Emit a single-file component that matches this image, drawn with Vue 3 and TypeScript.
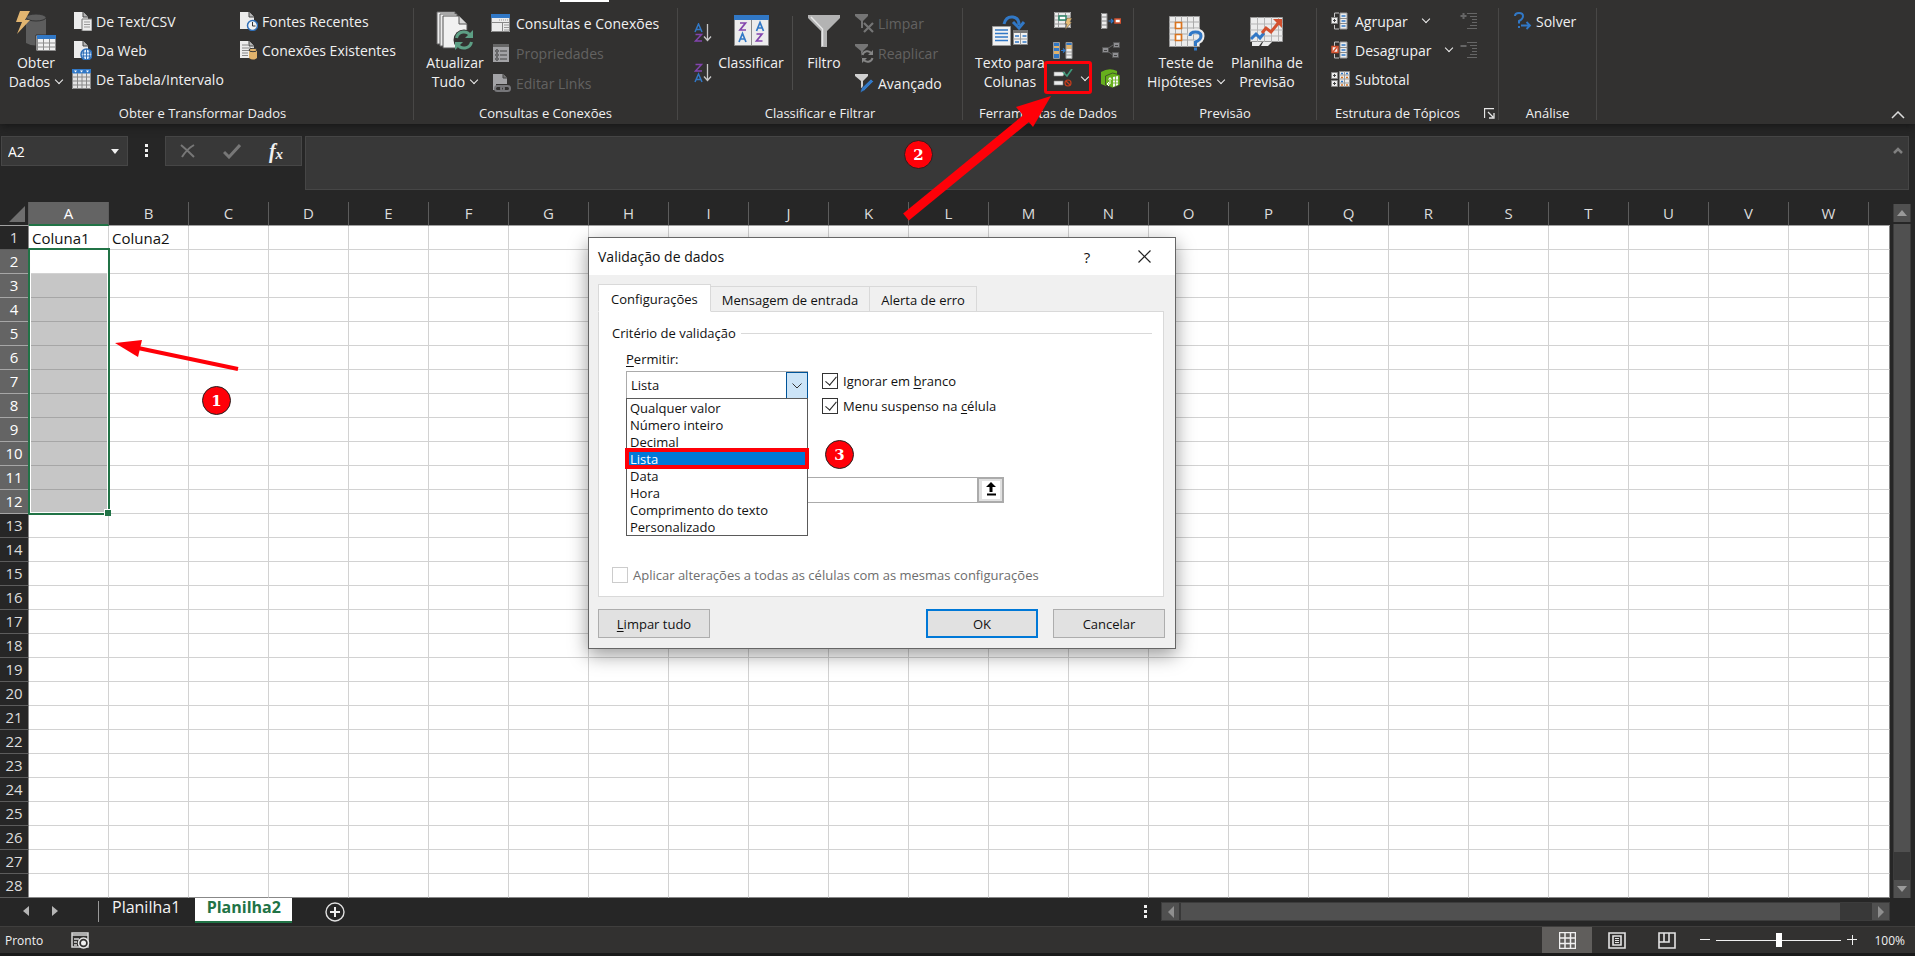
<script setup lang="ts">
import { ref } from 'vue'

const page = '<path d="M2 1h9l5 5v12H2z" fill="#ececec"/><path d="M11 1v5h5" fill="#b5b5b5" stroke="#444" stroke-width="1"/>'
const funnel = '<path d="M1 1h13v2l-5 5v7H7V8L1 3z"/>'

const icons: Record<string, string> = {
  text: page + '<path d="M10 8h10v12H10z" fill="#ececec" stroke="#777"/><path d="M12 11h6M12 13.500h6M12 16h6" stroke="#999"/>',
  web: page + '<circle cx="14.500" cy="14.500" r="5.500" fill="#e8f1fb" stroke="#2f6fb8" stroke-width="1.500"/><path d="M9 13h11M9 16h11M14.500 9v11M12 9.500q-1.500 5 0 10M17 9.500q1.500 5 0 10" stroke="#2f6fb8" fill="none"/>',
  tableRange: '<path d="M0 0h19v20H0z" fill="#e4e4e4"/><path d="M0 0h19v4.500H0z" fill="#3178c6"/><path d="M2 1.500h3l-1.500 2zM8 1.500h3l-1.500 2zM14 1.500h3l-1.500 2z" fill="#fff"/><path d="M0.500 4v15.500h18V4M0 8h19M0 12h19M0 16h19M5.500 4v16M10 4v16M14.500 4v16" stroke="#888" fill="none"/>',
  recent: page + '<circle cx="14.500" cy="14.500" r="5" fill="#f2f2f2" stroke="#2f6fb8" stroke-width="1.500"/><path d="M14.500 11v4h3" stroke="#333" fill="none"/>',
  existing: page + '<path d="M4 5h6M4 8h9M4 10.500h7M4 13h6M4 15.500h6" stroke="#888"/><path d="M11 10h8v8q-4 3-8 0z" fill="#e0b26b"/><ellipse cx="15" cy="10" rx="4" ry="1.700" fill="#e0b26b" stroke="#3a3a3a"/>',
  queries: '<path d="M0 1h19v18H0z" fill="#ececec"/><path d="M0 1h19v4H0z" fill="#3178c6"/><path d="M8 7h10" stroke="#999" stroke-dasharray="1 1"/><path d="M0.500 5v13.500h18V5M1 9.500h18M11.500 9v10" stroke="#888" fill="none"/><path d="M13 12h5M13 14.500h5M13 17h5" stroke="#999"/>',
  props: '<path d="M2 1h16v18H2z" fill="#a3a3a6"/><path d="M2 1h16v3H2z" fill="#666"/><g fill="none" stroke="#444"><circle cx="6" cy="8" r="1.300"/><circle cx="6" cy="12" r="1.300"/><circle cx="6" cy="16" r="1.300"/><path d="M9 8h7M9 12h7M9 16h7"/></g>',
  links: '<path d="M2 1h10l4 4v12H2z" fill="#a3a3a6"/><path d="M12 1v4h4" stroke="#444" fill="#777"/><path d="M5 11h14v8H5z" fill="#323130"/><g fill="none" stroke="#77777a" stroke-width="2"><rect x="4" y="13" width="9" height="5" rx="2.500"/><rect x="10" y="13" width="9" height="5" rx="2.500"/></g>',
  clear: '<g fill="#757575">' + funnel + '</g><path d="M10 10l9 9M19 10l-9 9" stroke="#757575" stroke-width="2.200"/>',
  reapply: '<g fill="#757575">' + funnel + '</g><circle cx="13.500" cy="13.500" r="6.500" fill="#323130"/><path d="M8.500 12a5 5 0 0 1 9-1.500M18.500 15a5 5 0 0 1-9 1.500" fill="none" stroke="#858585" stroke-width="2"/><path d="M19 7v5h-5zM8 20v-5h5z" fill="#858585"/>',
  advanced: '<g fill="#d0d0d0">' + funnel + '</g><path d="M6 20l1.500-5L17 6l2.500 2.500-9 9z" fill="#3178c6" stroke="#323130" stroke-width=".7"/>',
  flash: '<path d="M1 1h17v16H1z" fill="#ececec"/><path d="M1.500 1.500h16v15h-16zM1 5h17M1 9h17M1 13h17M5.500 1v16M12.500 1v16" stroke="#999" fill="none"/><path d="M6 5h7v4H6z" fill="#fff" stroke="#2b8467" stroke-width="1.500"/><path d="M14 7h5l-2 4h2l-7 8 2-6h-2z" fill="#e6bd77" stroke="#323130" stroke-width=".5"/>',
  dupes: '<path d="M0 2h6v16H0zM13 2h6v16h-6z" fill="#ececec"/><path d="M0 2h6v4H0zM0 14h6v4H0zM13 2h6v3h-6z" fill="#3178c6"/><path d="M0 6h6v2H0zM0 11h6v3H0zM13 5h6v4h-6z" fill="#e0b26b"/><path d="M0 8h6v3H0z" fill="#3178c6"/><path d="M.5 2.500h6v16h-6zM13 2.500h6v16h-6zM13 12h6M13 15h6" stroke="#999" fill="none"/><path d="M8 10.500h3.500M10 8.500l2 2-2 2" stroke="#3178c6" stroke-width="1.200" fill="none"/>',
  validate: '<path d="M1 3h11l-2 4H1zM1 12h9v4H1z" fill="#ececec" stroke="#888" stroke-width=".6"/><path d="M10 3l4 4 5-7" stroke="#3f9a7b" stroke-width="1.700" fill="none"/><circle cx="15" cy="14" r="3" fill="none" stroke="#c83c1c" stroke-width="1.200"/><path d="M13 12l4 4" stroke="#c83c1c" stroke-width="1.200"/>',
  consolidate: '<path d="M0 2h6v16H0z" fill="#ececec"/><path d="M.5 2.500h5.500v15H.5zM0 6h6M0 10h6M0 14h6" stroke="#888" fill="none"/><path d="M7.500 10h4M10 8l2 2-2 2" stroke="#3178c6" stroke-width="1.200" fill="none"/><path d="M14 8h5.500v4H14z" fill="#fff" stroke="#d3512f" stroke-width="1.500"/>',
  relations: '<path d="M6 9l6-4M6 11l6 4" stroke="#666"/><g fill="#8e8e91" stroke="#555"><path d="M1.500 7.500h6v5h-6zM12.500 2.500h6v5h-6zM11.500 12.500h6v5h-6z"/></g><path d="M3 10.500h3M14 5.500h3M13 15.500h3" stroke="#444"/>',
  model: '<path d="M0 3q8-5 16-1v6L6 10l-1 7-5-2z" fill="#66b01c"/><path d="M4.500 7l7-3 7.500 2v10l-7.500 3-7-3z" fill="#66b01c" stroke="#323130" stroke-width=".7"/><path d="M12 8l5-1v9l-5 2z" fill="#f3f3f3"/><path d="M12 11h5M12 14h5M14.500 7v10" stroke="#66b01c" stroke-width=".8"/><path d="M7 15h2V9M7.500 10.500L9 8.500l1.500 2M8 13l-2 2 2 2" fill="none" stroke="#fff"/>',
  group: '<path d="M8 1H3.500v4M8 17H3.500v-4" stroke="#c4c4c4" fill="none"/><path d="M.5 5.500h6v6h-6z" fill="#ececec" stroke="#888"/><path d="M3.500 7v3M2 8.500h3" stroke="#444"/><path d="M9 1h7v16H9z" fill="#ececec" stroke="#999"/><path d="M9 6.500h7M9 11.500h7" stroke="#888"/><path d="M10.500 4h4M10.500 9h4M10.500 14h4" stroke="#3178c6" stroke-width="1.500"/>',
  ungroup: '<path d="M8 1H3.500v4M8 17H3.500v-4" stroke="#c4c4c4" fill="none"/><path d="M1 5.500h6v6H1z" fill="#f3f3f3" stroke="#d3512f" stroke-width="1.500"/><path d="M2 11l4-5" stroke="#d3512f" stroke-width="1.500"/><path d="M9 1h7v16H9z" fill="#ececec" stroke="#999"/><path d="M9 6.500h7M9 11.500h7" stroke="#888"/><path d="M10.500 4h4M10.500 9h4M10.500 14h4" stroke="#3178c6" stroke-width="1.500"/>',
  subtotal: '<g fill="#ececec" stroke="#888"><path d="M.5 2.500h6v6h-6zM.5 10.500h6v6h-6zM8.500 1.500h10v15h-10z"/></g><path d="M3.500 4v3M2 5.500h3M3.500 12v3M2 13.500h3" stroke="#444"/><path d="M8 5h11M8 9h11M8 13h11M13.500 1v16" stroke="#999"/><path d="M10 3.500h2M10 11.500h2M15 3.500h2" stroke="#3178c6" stroke-width="1.500"/><path d="M10 7.500h2M15 7.500h2M10 15h2M15 15h2" stroke="#d9741f" stroke-width="1.500"/>',
  showDetail: '<path d="M3.500 1v6M.5 4h6" stroke="#666" stroke-width="2"/><path d="M7 1.500h10M10 4.500h7M12 7.500h5M12 10.500h5M10 13.500h7M7 16.500h10" stroke="#666"/>',
  hideDetail: '<path d="M.5 5h6" stroke="#666" stroke-width="2"/><path d="M7 1.500h10M10 4.500h7M12 7.500h5M12 10.500h5M10 13.500h7M7 16.500h10" stroke="#666"/>',
  solver: '<path d="M1 4q0-3 4-3t4 3-4 5v2.500" stroke="#3178c6" stroke-width="2" fill="none"/><path d="M4 14h2v2H4z" fill="#3178c6"/><path d="M7 13.500h9M12.500 10l3.500 3.500-3.500 3.500" stroke="#3178c6" stroke-width="1.800" fill="none"/>',
  getData: '<path d="M10 6v26q9 5 20 0V6z" fill="#5d5d5d"/><ellipse cx="20" cy="6.500" rx="10" ry="3.500" fill="#5d5d5d" stroke="#333"/><path d="M4 0h10L9 9h5L1 23l5-12H0z" fill="#e2b570"/><path d="M20 24h20v16H20z" fill="#f0f0f0" stroke="#323130"/><path d="M21 24h19v4H21z" fill="#3178c6"/><path d="M21.500 28v11.500h18V28M21 32h19M21 36h19M27.500 28v12M33.500 28v12" stroke="#8c8c8c" fill="none"/>',
  refresh: '<path d="M1 1h18v32H1z" fill="#ececec" stroke="#666"/><path d="M4 3h17v32H4z" fill="#ececec" stroke="#666"/><path d="M7 5h16l8 8v24H7z" fill="#f1f1f1" stroke="#555"/><path d="M23 5v8h8" fill="#d8d8d8" stroke="#555"/><circle cx="28" cy="29" r="10.500" fill="#323130"/><path d="M20.500 27a7.500 7.500 0 0 1 14-2M35.500 31a7.500 7.500 0 0 1-14 2" fill="none" stroke="#5d9f85" stroke-width="3"/><path d="M37 19v8h-8zM19 39v-8h8z" fill="#5d9f85"/>',
  sort: '<path d="M.5.5h34v30H.5z" fill="#ececec" stroke="#888"/><path d="M0 0h35v5H0z" fill="#3178c6"/><path d="M17.500 5v26" stroke="#888"/><g fill="none" stroke-width="1.700"><path d="M6 8h5.500L6 15h6M22.500 19h5.500l-5.500 7h6" stroke="#8244ad"/><path d="M5 27l3.500-8.500L12 27M6.500 24h4M22.500 16L26 7.500l3.500 8.500M24 13h4" stroke="#3178c6"/></g>',
  filter: '<path d="M0 0h32v3L19 16v16h-6V16L0 3z" fill="#b3b3b3"/><path d="M3 2l11.500 12v17" stroke="#e6e6e6" fill="none" stroke-width="1.500"/>',
  columns: '<path d="M.5 11.500h18v19H.5z" fill="#f1f1f1" stroke="#999"/><path d="M3 15h13M3 18.500h13M3 22h13M3 25.500h13" stroke="#3178c6" stroke-width="1.300"/><path d="M21.500 15.500h14v14h-14z" fill="#f1f1f1" stroke="#888"/><path d="M21 15h15v3H21z" fill="#777"/><path d="M28.500 18v12M21 24h15" stroke="#999"/><path d="M23 21h4M30.500 21h4M23 27h4M30.500 27h4" stroke="#3178c6" stroke-width="1.300"/><path d="M12 9q2-8 9-7 6 1 6 8" stroke="#3178c6" stroke-width="3" fill="none"/><path d="M21 7l6 6 5-6" stroke="#3178c6" stroke-width="3" fill="none"/>',
  whatIf: '<path d="M.5.5h30v30H.5z" fill="#ececec" stroke="#999"/><path d="M0 6h31M0 12h31M0 18h31M0 24h31M6.500 0v31M12.500 0v31M18.500 0v31M24.500 0v31" stroke="#aaa"/><path d="M6.500 6.500h6v6h-6zM6.500 18.500h6v6h-6z" fill="#fff" stroke="#d9741f" stroke-width="1.700"/><path d="M21 20q0-5 6-5t6 5-6 6v4" stroke="#ececec" stroke-width="5" fill="none"/><path d="M21 20q0-4 5.500-4t5.500 4-5.500 6v4M25 33h3" stroke="#3178c6" stroke-width="3" fill="none"/>',
  forecast: '<path d="M.5.5h32v24H.5z" fill="#ececec" stroke="#999"/><path d="M2 25h10l-3 4H2zM13 25h9l-4 4h-7z" fill="#ececec"/><path d="M0 7h33M0 13h33M0 19h33M7.500 0v25M14.500 0v25M21.500 0v25M28.500 0v25" stroke="#b5b5b5"/><path d="M1 22l5-5 4 4 4-5" stroke="#3178c6" stroke-width="3" fill="none"/><path d="M12 16l4-5 5 4 9-11" stroke="#d3512f" stroke-width="3" fill="none"/><path d="M23 2h9v9z" fill="#d3512f"/>',
  az: '<g fill="none" stroke-width="1.500"><path d="M1 9l3.500-8L8 9M2.500 6.500h4" stroke="#3178c6"/><path d="M1.500 11.500h6l-6 6.500h6.500" stroke="#8244ad"/></g><path d="M13.500 1v16M10 13.500l3.500 4 3.500-4" stroke="#c8c8c8" stroke-width="1.300" fill="none"/>',
  za: '<g fill="none" stroke-width="1.500"><path d="M1 19l3.500-8L8 19M2.500 16.500h4" stroke="#3178c6"/><path d="M1.500 1.500h6L1.500 8H8" stroke="#8244ad"/></g><path d="M13.500 1v16M10 13.500l3.500 4 3.500-4" stroke="#c8c8c8" stroke-width="1.300" fill="none"/>',
}

const columns = 'ABCDEFGHIJKLMNOPQRSTUVW'.split('')
const rowCount = 28
const cells: Record<string, string> = { A1: 'Coluna1', B1: 'Coluna2' }
const inSelection = (row: number) => row >= 2 && row <= 12

const options = [
  'Qualquer valor', 'Número inteiro', 'Decimal', 'Lista',
  'Data', 'Hora', 'Comprimento do texto', 'Personalizado',
]
const allow = ref('Lista')
const ignoreBlank = ref(true)
const inCellMenu = ref(true)
const source = ref('')
const formula = ref('')
const cellName = ref('A2')
const zoom = ref(50)
</script>

<template>
  <div class="app">
    <header class="ribbon">
      <i class="active-tab"></i>
      <section class="group g-get">
        <div class="body">
          <button class="big w72"><svg width="40" height="42" viewBox="0 0 40 42" v-html="icons.getData" /><span>Obter</span><span>Dados <i class="caret" /></span></button>
          <div class="stack get-files">
            <button class="cmd"><svg width="20" height="20" v-html="icons.text" />De Text/CSV</button>
            <button class="cmd"><svg width="20" height="20" v-html="icons.web" />Da Web</button>
            <button class="cmd"><svg width="20" height="20" v-html="icons.tableRange" />De Tabela/Intervalo</button>
          </div>
          <div class="stack">
            <button class="cmd"><svg width="20" height="20" v-html="icons.recent" />Fontes Recentes</button>
            <button class="cmd"><svg width="20" height="20" v-html="icons.existing" />Conexões Existentes</button>
          </div>
        </div>
        <h2>Obter e Transformar Dados</h2>
      </section>

      <section class="group g-queries">
        <div class="body">
          <button class="big w72"><svg width="38" height="42" viewBox="0 0 38 42" v-html="icons.refresh" /><span>Atualizar</span><span>Tudo <i class="caret" /></span></button>
          <div class="stack loose">
            <button class="cmd wide"><svg width="20" height="20" v-html="icons.queries" />Consultas e Conexões</button>
            <button class="cmd wide" disabled><svg width="20" height="20" v-html="icons.props" />Propriedades</button>
            <button class="cmd wide" disabled><svg width="20" height="20" v-html="icons.links" />Editar Links</button>
          </div>
        </div>
        <h2>Consultas e Conexões</h2>
      </section>

      <section class="group g-sort">
        <div class="body">
          <div class="stack az">
            <button class="cmd" aria-label="Classificar de A a Z"><svg width="18" height="20" v-html="icons.az" /></button>
            <button class="cmd" aria-label="Classificar de Z a A"><svg width="18" height="20" v-html="icons.za" /></button>
          </div>
          <button class="big w78"><svg width="35" height="42" viewBox="0 -4 35 42" v-html="icons.sort" /><span>Classificar</span></button>
          <i class="divider" />
          <button class="big w60"><svg width="32" height="42" viewBox="0 -4 32 42" v-html="icons.filter" /><span>Filtro</span></button>
          <div class="stack loose">
            <button class="cmd" disabled><svg width="20" height="20" v-html="icons.clear" />Limpar</button>
            <button class="cmd" disabled><svg width="20" height="20" v-html="icons.reapply" />Reaplicar</button>
            <button class="cmd"><svg width="20" height="20" v-html="icons.advanced" />Avançado</button>
          </div>
        </div>
        <h2>Classificar e Filtrar</h2>
      </section>

      <section class="group g-tools">
        <div class="body">
          <button class="big w84"><svg width="36" height="42" viewBox="0 -4 36 42" v-html="icons.columns" /><span>Texto para</span><span>Colunas</span></button>
          <div class="stack tools-a">
            <button class="cmd" aria-label="Preenchimento relâmpago"><svg width="20" height="20" v-html="icons.flash" /></button>
            <button class="cmd" aria-label="Remover duplicadas"><svg width="20" height="20" v-html="icons.dupes" /></button>
            <button class="cmd" aria-label="Validação de dados"><svg width="20" height="20" v-html="icons.validate" /><i class="caret" /></button>
          </div>
          <div class="stack">
            <button class="cmd" aria-label="Consolidar"><svg width="20" height="20" v-html="icons.consolidate" /></button>
            <button class="cmd" aria-label="Relações"><svg width="20" height="20" v-html="icons.relations" /></button>
            <button class="cmd" aria-label="Modelo de dados"><svg width="20" height="20" v-html="icons.model" /></button>
          </div>
        </div>
        <h2>Ferramentas de Dados</h2>
      </section>

      <section class="group g-forecast">
        <div class="body">
          <button class="big w90"><svg width="34" height="42" viewBox="0 -5 34 42" v-html="icons.whatIf" /><span>Teste de</span><span>Hipóteses <i class="caret" /></span></button>
          <button class="big w72"><svg width="34" height="42" viewBox="0 -6 34 42" v-html="icons.forecast" /><span>Planilha de</span><span>Previsão</span></button>
        </div>
        <h2>Previsão</h2>
      </section>

      <section class="group g-outline">
        <div class="body">
          <div class="stack outline-main">
            <button class="cmd"><svg width="20" height="18" v-html="icons.group" />Agrupar<i class="caret far" /></button>
            <button class="cmd"><svg width="20" height="18" v-html="icons.ungroup" />Desagrupar<i class="caret far" /></button>
            <button class="cmd"><svg width="20" height="18" v-html="icons.subtotal" />Subtotal</button>
          </div>
          <div class="stack">
            <button class="cmd" disabled aria-label="Mostrar detalhe"><svg width="18" height="18" v-html="icons.showDetail" /></button>
            <button class="cmd" disabled aria-label="Ocultar detalhe"><svg width="18" height="18" v-html="icons.hideDetail" /></button>
          </div>
        </div>
        <h2>Estrutura de Tópicos</h2>
        <button class="launcher" aria-label="Configurações de estrutura"><svg width="11" height="11"><path d="M10 0.500H.5V10M4 4l5 5M10 5v5H5" fill="none" stroke="#e6e6e6" stroke-width="1.300" /></svg></button>
      </section>

      <section class="group g-analysis">
        <div class="body">
          <div class="stack">
            <button class="cmd"><svg width="18" height="18" v-html="icons.solver" />Solver</button>
          </div>
        </div>
        <h2>Análise</h2>
      </section>
      <button class="collapse" aria-label="Recolher faixa de opções"><svg width="14" height="8"><path d="M1 7l6-6 6 6" fill="none" stroke="#dcdcdc" stroke-width="1.500" /></svg></button>
    </header>

    <div class="formula-bar">
      <div class="name-box">
        <input v-model="cellName" aria-label="Caixa de nome">
        <svg width="8" height="5"><path d="M0 0h8L4 5z" fill="#f0f0f0" /></svg>
      </div>
      <i class="dots" />
      <div class="fx-box">
        <button aria-label="Cancelar edição"><svg width="16" height="14"><path d="M1 1q6 5 13 12M14 1Q7 5 2 13" fill="none" stroke="#777" stroke-width="2" /></svg></button>
        <button aria-label="Inserir"><svg width="18" height="15"><path d="M1 8l5 5L17 1" fill="none" stroke="#777" stroke-width="3" /></svg></button>
        <button class="fx" aria-label="Inserir função">f<sub>x</sub></button>
      </div>
      <div class="formula">
        <textarea v-model="formula" aria-label="Barra de fórmulas" />
        <svg width="10" height="7"><path d="M1 6l4-4 4 4" fill="none" stroke="#808080" stroke-width="2.500" /></svg>
      </div>
    </div>

    <main class="workspace">
      <div class="sheet">
        <table>
          <colgroup><col class="c-head"><col v-for="c in columns" :key="c" class="c-cell"><col></colgroup>
          <thead>
            <tr>
              <th class="corner"><svg width="16" height="16"><path d="M16 0v16H0z" fill="#6e6e6e" /></svg></th>
              <th v-for="c in columns" :key="c" :class="{ on: c === 'A' }">{{ c }}</th>
              <th />
            </tr>
          </thead>
          <tbody>
            <tr v-for="r in rowCount" :key="r">
              <th :class="{ on: inSelection(r) }">{{ r }}</th>
              <td v-for="c in columns" :key="c" :class="{ sel: c === 'A' && inSelection(r) && r > 2 }">{{ cells[c + r] }}</td>
              <td />
            </tr>
          </tbody>
        </table>
        <div class="selection"><i /></div>
      </div>
      <div class="vscroll">
        <button aria-label="Rolar para cima"><svg width="10" height="6"><path d="M5 0l5 6H0z" fill="#9a9a9a" /></svg></button>
        <div class="vthumb" />
        <div class="vtrack" />
        <button aria-label="Rolar para baixo"><svg width="10" height="6"><path d="M0 0h10L5 6z" fill="#9a9a9a" /></svg></button>
      </div>
    </main>

    <nav class="tabs">
      <button class="arrow" aria-label="Planilha anterior"><svg width="6" height="10"><path d="M6 0v10L0 5z" fill="#b5b5b5" /></svg></button>
      <button class="arrow" aria-label="Próxima planilha"><svg width="6" height="10"><path d="M0 0l6 5-6 5z" fill="#b5b5b5" /></svg></button>
      <i class="tab-line" />
      <a href="#planilha1" class="tab">Planilha1</a>
      <a href="#planilha2" class="tab current">Planilha2</a>
      <button class="add" aria-label="Nova planilha"><svg width="20" height="20"><circle cx="10" cy="10" r="9" fill="none" stroke="#e0e0e0" stroke-width="1.400" /><path d="M10 5v10M5 10h10" stroke="#f0f0f0" stroke-width="2" /></svg></button>
      <div class="hscroll-area">
        <i class="dots" />
        <div class="hscroll">
          <button aria-label="Rolar para a esquerda"><svg width="6" height="12"><path d="M6 0v12L0 6z" fill="#8f8f8f" /></svg></button>
          <div class="hthumb" />
          <div class="htrack" />
          <button aria-label="Rolar para a direita"><svg width="6" height="12"><path d="M0 0l6 6-6 6z" fill="#8f8f8f" /></svg></button>
        </div>
      </div>
    </nav>

    <footer class="status">
      <span>Pronto</span>
      <button class="macro" aria-label="Gravar macro"><svg width="19" height="17"><path d="M1 1h16v14H1z" fill="none" stroke="#d8d8d8" stroke-width="1.500" /><path d="M1 3h16M3 7h5M3 10h3M3 13h3" stroke="#d8d8d8" stroke-width="1.500" /><circle cx="12.500" cy="11" r="5" fill="#323130" stroke="#e8e8e8" stroke-width="1.500" /><circle cx="12.500" cy="11" r="2.500" fill="#f0f0f0" /></svg></button>
      <div class="views">
        <button class="view active" aria-label="Normal"><svg width="17" height="17"><path d="M.5.500h16v16H.5zM6 0v17M11.500 0v17M0 6h17M0 11.500h17" fill="none" stroke="#f0f0f0" stroke-width="1.500" /></svg></button>
        <button class="view" aria-label="Layout da página"><svg width="18" height="17"><path d="M1 1h16v15H1zM5 4h8v9H5z" fill="none" stroke="#e4e4e4" stroke-width="1.600" /><path d="M7 6.500h4M7 8.500h4M7 10.500h4" stroke="#e4e4e4" /></svg></button>
        <button class="view" aria-label="Quebra de página"><svg width="18" height="17"><path d="M1 1h16v15H1zM1 10h10V1M6 1v9" fill="none" stroke="#e4e4e4" stroke-width="1.600" /></svg></button>
      </div>
      <button class="zoom-btn" aria-label="Reduzir"><svg width="10" height="10"><path d="M0 4.500h10" stroke="#f0f0f0" /></svg></button>
      <input v-model="zoom" class="zoom" type="range" min="0" max="100" aria-label="Zoom">
      <button class="zoom-btn" aria-label="Ampliar"><svg width="10" height="10"><path d="M0 4.500h10M5.500 0v10" stroke="#f0f0f0" /></svg></button>
      <span class="pct">100%</span>
    </footer>

    <form class="dialog" role="dialog" aria-labelledby="dlg-title" @submit.prevent>
      <div class="dlg-head">
        <h1 id="dlg-title">Validação de dados</h1>
        <button type="button" class="help" aria-label="Ajuda">?</button>
        <button type="button" class="close" aria-label="Fechar"><svg width="13" height="13"><path d="M.5.500l12 12M12.500.500l-12 12" stroke="#222" stroke-width="1.200" /></svg></button>
      </div>
      <div class="dlg-body">
        <div class="dlg-tabs" role="tablist">
          <button type="button" role="tab" class="active" aria-selected="true">Configurações</button>
          <button type="button" role="tab">Mensagem de entrada</button>
          <button type="button" role="tab">Alerta de erro</button>
        </div>
        <div class="panel">
          <div class="legend">Critério de validação</div>
          <div class="criteria">
            <label for="allow"><u>P</u>ermitir:</label>
            <div class="line">
              <div class="combo">
                <select id="allow" v-model="allow"><option v-for="o in options" :key="o">{{ o }}</option></select>
                <span class="drop"><svg width="10" height="6"><path d="M.5.500L5 5 9.500.500" fill="none" stroke="#333" /></svg></span>
                <ul class="list" role="listbox" aria-label="Permitir">
                  <li v-for="o in options" :key="o" role="option" :aria-selected="o === allow" :class="{ picked: o === allow }" @click="allow = o">{{ o }}</li>
                </ul>
              </div>
              <div class="checks">
                <label><input v-model="ignoreBlank" type="checkbox"><span>Ignorar em <u>b</u>ranco</span></label>
                <label><input v-model="inCellMenu" type="checkbox"><span>Menu suspenso na <u>c</u>élula</span></label>
              </div>
            </div>
            <div class="source">
              <input v-model="source" type="text" aria-label="Fonte">
              <button type="button" aria-label="Selecionar intervalo"><svg width="18" height="18"><path d="M0 0h18v18H0z" fill="#fff" /><path d="M9 1l5 5h-3.500v5h-3V6H4zM5 12.500h9v2H5z" fill="#000" /></svg></button>
            </div>
          </div>
          <label class="apply"><input type="checkbox" disabled><span>Aplicar alterações a todas as células com as mesmas configurações</span></label>
        </div>
        <div class="actions">
          <button type="button"><span><u>L</u>impar tudo</span></button>
          <button type="submit" class="primary">OK</button>
          <button type="button">Cancelar</button>
        </div>
      </div>
    </form>

    <svg class="arrows" width="1100" height="400" aria-hidden="true">
      <path d="M238 369L138 348" stroke="#ff0008" stroke-width="4" />
      <path d="M115 343l27-3-4 17z" fill="#ff0008" />
      <path d="M906 217L1028 117" stroke="#ff0008" stroke-width="9" />
      <path d="M1051 96l-18 31-17-20z" fill="#ff0008" />
    </svg>
    <i class="mark-box" />
    <b class="badge one">1</b>
    <b class="badge two">2</b>
    <b class="badge three">3</b>
  </div>
</template>

<style>
body { background: #262626; }
</style>

<style scoped>
.app { position: relative; display: flex; flex-direction: column; min-height: 100vh; background: #262626; color: #f0f0f0; font-family: "Open Sans", "Noto Sans", sans-serif; font-size: 14px; overflow: hidden; }
* { box-sizing: border-box; }
button { padding: 0; border: 0; background: none; color: inherit; font: inherit; }
svg { display: block; flex: none; }
h1, h2 { margin: 0; font-weight: 400; }
i { font-style: normal; }

.ribbon { position: relative; display: flex; height: 124px; background: #323130; z-index: 1; box-shadow: 0 2px 8px #161616; }
.active-tab { position: absolute; left: 560px; top: 0; width: 49px; height: 2px; background: #fff; }
.group { position: relative; flex: none; display: flex; flex-direction: column; margin: 8px 0 4px; border-right: 1px solid #484746; }
.group .body { display: flex; height: 99px; }
.group h2 { font-size: 13px; line-height: 13px; text-align: center; white-space: nowrap; }
.g-get { width: 414px; }
.g-get h2 { padding-right: 8px; }
.g-queries { width: 264px; }
.g-queries .body { padding-left: 5px; }
.g-sort { width: 285px; }
.g-tools { width: 171px; }
.g-tools .body { padding-left: 5px; }
.g-forecast { width: 183px; }
.g-forecast .body { padding-left: 7px; }
.g-outline { width: 182px; padding-right: 20px; }
.g-outline .body { padding-left: 14px; }
.g-analysis { width: 98px; }
.g-analysis .body { padding-left: 15px; }
.big { flex: none; display: flex; flex-direction: column; align-items: center; align-self: flex-start; height: 84px; padding-top: 3px; line-height: 19px; white-space: nowrap; }
.big svg { overflow: visible; }
.big span { display: flex; align-items: center; gap: 5px; }
.w60 { width: 60px; } .w72 { width: 72px; } .w78 { width: 78px; } .w84 { width: 84px; } .w90 { width: 90px; }
.caret { width: 6px; height: 6px; margin: 0 1px 4px; border: solid #f0f0f0; border-width: 0 1px 1px 0; transform: rotate(45deg); }
.caret.far { margin-left: 11px; }
.stack { display: flex; flex-direction: column; gap: 3px; }
.stack.loose { gap: 4px; padding-top: 2px; }
.cmd { display: flex; align-items: center; gap: 4px; height: 26px; white-space: nowrap; }
.cmd.wide { gap: 5px; }
.cmd:disabled { color: #636261; }
.get-files { width: 166px; }
.stack.az { width: 34px; padding: 12px 0 0 16px; gap: 14px; }
.divider { width: 1px; height: 74px; margin: 8px 1px 0 2px; background: #4d4c4b; }
.tools-a { width: 48px; margin-left: 1px; }
.tools-a .cmd { gap: 8px; }
.outline-main { width: 136px; }
.launcher { position: absolute; right: 3px; bottom: 1px; }
.collapse { margin: 0 10px 5px auto; align-self: flex-end; }

.formula-bar { display: flex; align-items: flex-start; height: 78px; padding: 12px 6px 12px 1px; }
.name-box, .fx-box, .formula { display: flex; border: 1px solid #464646; background: #383838; }
.name-box { width: 127px; height: 30px; align-items: center; padding-right: 8px; }
.name-box input { flex: 1; min-width: 0; padding: 0 0 0 6px; border: 0; outline: 0; background: none; color: #fff; font: inherit; }
.dots { width: 3px; height: 13px; background: repeating-linear-gradient(#f0f0f0 0 3px, transparent 3px 5px); }
.formula-bar .dots { margin: 8px 17px 0; }
.fx-box { width: 137px; height: 30px; padding-right: 3px; }
.fx-box button { flex: 1; display: grid; place-items: center; }
.fx-box .fx { display: block; font: italic bold 20px/24px "Liberation Serif", serif; }
.fx sub { font-size: 15px; line-height: 0; vertical-align: -1px; }
.formula { flex: 1; height: 54px; margin-left: 3px; padding: 10px 5px 0 0; }
.formula textarea { flex: 1; border: 0; outline: 0; resize: none; background: none; color: #fff; }

.workspace { display: flex; }
.sheet { position: relative; flex: 1; min-width: 0; }
table { width: 100%; table-layout: fixed; border-collapse: separate; border-spacing: 0; background: #fff; color: #111; font-size: 15px; }
.c-head { width: 29px; }
.c-cell { width: 80px; }
th, td { height: 24px; padding: 0; line-height: 20px; white-space: nowrap; overflow: hidden; }
td { padding-left: 3px; border-right: 1px solid #d2d2d2; border-bottom: 1px solid #d2d2d2; }
td:last-child { border-right-color: #888; }
tbody tr:last-child td { border-bottom-color: #888; }
td.sel { background: #c6c6c6; border-bottom-color: #a6a6a6; }
th { padding-bottom: 2px; background: #262626; color: #dcdcdc; font-weight: 400; border-bottom: 1px solid #5c5c5c; border-right: 1px solid #8a8a8a; }
thead th { border-right: 1px solid #5c5c5c; border-bottom-color: #a0a0a0; }
thead th:last-child { border-right: 0; }
th.on { background: #646464; color: #fff; border-bottom-color: #a6a6a6; }
thead th.on { padding-bottom: 1px; border-bottom: 2px solid #217346; }
.corner svg { margin: 2px 0 0 9px; }
.selection { position: absolute; left: 28px; top: 46px; width: 82px; height: 267px; border: 2px solid #217346; box-shadow: inset 0 0 0 1px #fff; pointer-events: none; }
.selection i { position: absolute; right: -3px; bottom: -3px; width: 7px; height: 7px; border: solid #fff; border-width: 1px 0 0 1px; background: #217346; }
.vscroll { width: 25px; padding: 2px 4px 0 3px; display: flex; flex-direction: column; }
.vscroll button { display: grid; place-items: center; height: 18px; background: #505050; }
.vscroll button, .vthumb, .vtrack { border: solid #3c3c3c; border-width: 0 1px; }
.vthumb { flex: 630; margin-top: 2px; background: #505050; }
.vtrack { flex: 28; background: #383838; }

.tabs { display: flex; align-items: flex-start; height: 28px; }
.arrow { width: 6px; margin: 8px 0 0 23px; }
.tab-line { width: 1px; height: 21px; margin: 3px 13px 0 40px; background: #999; }
.tab { height: 25px; line-height: 19px; font-size: 16px; color: #f4f4f4; text-decoration: none; }
.tab.current { min-width: 97px; margin-left: 15px; text-align: center; background: #fff; color: #217346; font-weight: 700; border-bottom: 2px solid #217346; }
.add { margin: 4px 0 0 33px; }
.hscroll-area { display: flex; width: 746px; margin: 4px 25px 0 auto; gap: 14px; }
.hscroll-area .dots { margin-top: 3px; }
.hscroll { flex: 1; display: flex; height: 19px; border: 1px solid #3c3c3c; background: #383838; }
.hscroll button { width: 17px; display: grid; place-items: center; background: #505050; }
.hthumb { flex: 658; margin-left: 2px; background: #505050; }
.htrack { flex: 32; }

.status { display: flex; align-items: center; flex: 1; min-height: 30px; padding: 0 10px 0 5px; background: #323130; border-top: 1px solid #3f3e3d; border-bottom: 3px solid #1a1a1a; font-size: 12px; }
.macro { margin-left: 28px; }
.views { display: flex; align-self: stretch; margin-left: auto; }
.view { width: 50px; display: grid; place-items: center; }
.view.active { background: #605e5c; }
.zoom-btn { width: 10px; }
.views + .zoom-btn { margin-left: 8px; }
.zoom { appearance: none; width: 125px; height: 15px; margin: 0 6px; background: linear-gradient(#f0f0f0, #f0f0f0) center / 100% 1px no-repeat; }
.zoom::-webkit-slider-thumb { appearance: none; width: 6px; height: 14px; background: #fff; }
.pct { margin-left: 17px; }

.dialog { position: absolute; z-index: 2; left: 588px; top: 237px; width: 588px; border: 1px solid #666; background: #f0f0f0; color: #111; font-size: 13px; box-shadow: 0 6px 18px #0006; }
.dlg-head { display: flex; align-items: center; height: 37px; padding: 0 24px 0 9px; background: #fff; }
.dlg-head h1 { flex: 1; font-size: 14px; }
.help { width: 8px; margin-right: 47px; font-size: 15px; }
.dlg-body { padding: 9px 10px 10px 9px; }
.dlg-tabs { display: flex; align-items: flex-end; height: 28px; margin-bottom: -1px; }
.dlg-tabs button { height: 26px; padding: 2px 11px 0; border: 1px solid #d9d9d9; border-left-width: 0; background: #f0f0f0; }
.dlg-tabs .active { position: relative; height: 28px; padding: 1px 12px 0; border-left-width: 1px; border-bottom-color: #fff; background: #fff; }
.panel { width: 566px; height: 286px; padding: 12px 11px 0 13px; border: 1px solid #d9d9d9; background: #fff; line-height: 18px; display: flex; flex-direction: column; }
.legend { display: flex; align-items: center; gap: 5px; }
.legend::after { content: ""; flex: 1; height: 1px; background: #d9d9d9; }
.criteria { margin: 8px 0 0 14px; }
.criteria > label { display: block; }
u { text-underline-offset: 2px; }
.line { display: flex; gap: 14px; height: 28px; margin-top: 3px; }
.combo { position: relative; width: 182px; height: 28px; }
.combo select { appearance: none; width: 100%; height: 28px; padding: 0 4px; border: 1px solid #ababab; border-radius: 0; background: #fff; color: #111; font: inherit; }
.drop { position: absolute; right: 0; top: 1px; width: 22px; height: 27px; display: grid; place-items: center; border: 1px solid #005499; background: #cce4f7; pointer-events: none; }
.list { position: absolute; z-index: 1; left: 0; top: 27px; width: 182px; margin: 0; padding: 0; border: 1px solid #5a5a5a; background: #fff; list-style: none; line-height: 18px; }
.list li { padding-left: 3px; height: 17px; }
.list .picked { background: #0078d7; color: #fff; outline: 4px solid #ff0008; outline-offset: -2px; position: relative; }
.checks { margin-top: -3px; }
.checks label { display: flex; align-items: center; gap: 5px; height: 25px; }
input[type="checkbox"] { appearance: none; position: relative; flex: none; width: 16px; height: 16px; margin: 0; border: 1px solid #333; background: #fff; }
input[type="checkbox"]:checked::after { content: ""; position: absolute; left: 5px; top: 0; width: 5px; height: 10px; border: solid #222; border-width: 0 1px 1px 0; transform: rotate(40deg); }
input[type="checkbox"]:disabled { border-color: #ccc; }
.source { display: flex; width: 378px; margin-top: 78px; }
.source input { flex: 1; height: 26px; border: 1px solid #ababab; border-right: 0; outline: 0; }
.source button { display: grid; place-items: center; width: 27px; height: 26px; border: 2px solid #ababab; background: #e1e1e1; }
.apply { display: flex; align-items: center; gap: 5px; margin: auto 0 12px; color: #6d6d6d; white-space: nowrap; }
.actions { display: flex; margin-top: 12px; gap: 15px; }
.actions button { width: 112px; height: 29px; border: 1px solid #adadad; background: #e1e1e1; }
.actions button:first-child { margin-right: auto; }
.actions .primary { border: 2px solid #0078d7; }

.arrows { position: absolute; z-index: 3; left: 0; top: 0; pointer-events: none; }
.mark-box { position: absolute; z-index: 3; left: 1044px; top: 61px; width: 48px; height: 33px; border: 3px solid #ff0008; border-radius: 3px; }
.badge { position: absolute; z-index: 3; width: 29px; height: 29px; border: 1px solid #222; border-radius: 50%; background: #ff0008; color: #fff; font: bold 15px/28px "DejaVu Serif", serif; text-align: center; }
.one { left: 202px; top: 386px; }
.two { left: 904px; top: 140px; }
.three { left: 825px; top: 440px; }
</style>
